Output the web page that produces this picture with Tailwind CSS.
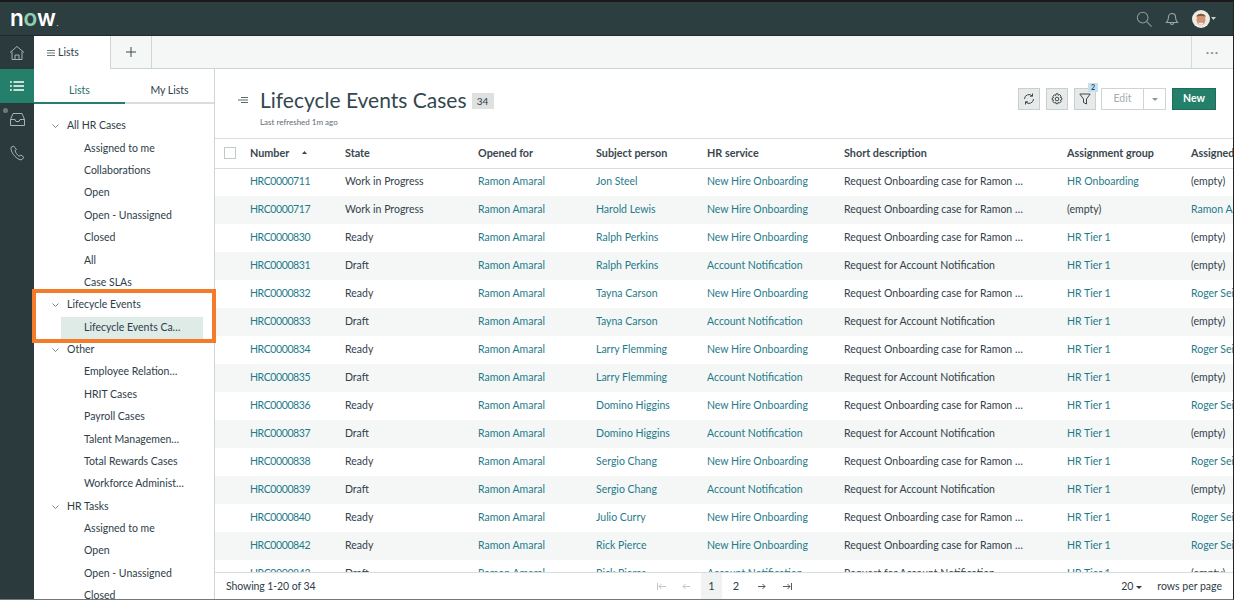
<!doctype html>
<html><head><meta charset="utf-8"><script src="https://cdn.jsdelivr.net/npm/@tailwindcss/browser@4"></script></head>
<body class="m-0 bg-white">
<div class="relative w-[1234px] h-[600px] overflow-hidden font-['Lato','Liberation_Sans',sans-serif] text-[10.5px] text-[#2e3d49] border-t-2 border-t-[#1a1a1a] border-b border-b-[#777] border-r border-r-[#222] flex flex-col">
  <header class="h-[34px] shrink-0 bg-[#2d3e40] flex items-center border-b border-[#1f2c2e]">
    <div class="ml-[10px] text-white font-['Inter',sans-serif] font-semibold text-[22.5px] leading-none tracking-[-0.3px] flex items-center">n<span class="text-[#8fd0b0]">o</span>w<span class="text-[6px] ml-px self-end mb-[3px]">.</span></div>
    <div class="ml-auto flex items-center mr-[17px]">
      <svg class="w-[16px] h-[16px] text-[#8d9a9b]" viewBox="0 0 18 18" fill="none" stroke="currentColor" stroke-width="1.200"><circle cx="7.500" cy="7.500" r="6"/><path d="M11.800 11.800l5.700 5.700"/></svg>
      <svg class="w-[14px] h-[15px] ml-[13px] text-[#9aa6a7]" viewBox="0 0 14 15" fill="none" stroke="currentColor" stroke-width="1.100"><path d="M1.500 11.500c1-1 2-2 2-5.500a3.500 3.500 0 017 0c0 3.500 1 4.500 2 5.500zM5.300 11.800a1.700 1.700 0 003.400 0"/></svg>
      <svg class="w-[18px] h-[18px] ml-[13px]" viewBox="0 0 17 17"><circle cx="8.500" cy="8.500" r="8.500" fill="#eeeae4"/><ellipse cx="8.500" cy="9" rx="4.200" ry="5.500" fill="#cf9472"/><path d="M4 6.500c.5-4 8.500-4 9 0-2-1.200-7-1.200-9 0z" fill="#7c5a3e"/><path d="M6 12h5l-1 2H7z" fill="#f4ece4"/></svg>
      <svg class="w-[5px] h-[3px] ml-[1px]" viewBox="0 0 5 3"><path d="M0 0h5L2.500 3z" fill="#c9d0d1"/></svg>
    </div>
  </header>
  <div class="flex flex-1 min-h-0">
    <nav class="w-[34px] shrink-0 bg-[#2b3a3c] flex flex-col">
      <div class="h-[33px] flex items-center justify-center"><svg class="w-[16px] h-[16px] text-[#a9b3b4]" viewBox="0 0 16 16" fill="none" stroke="currentColor" stroke-width="1"><path d="M1 7.500L8 1.500l7 6M3 6.500V14.500h10V6.500M6 14.500V10h4v4.500"/></svg></div>
      <div class="h-[34px] bg-[#24806a] flex items-center justify-center"><svg class="w-[14px] h-[10px] text-white" viewBox="0 0 14 10" fill="none" stroke="currentColor" stroke-width="1.400"><path d="M3.500 1H14M3.500 5H14M3.500 9H14M0 1h1.800M0 5h1.800M0 9h1.800"/></svg></div>
      <div class="relative h-[33px] flex items-center justify-center"><span class="absolute left-[3px] top-[5px] w-[5px] h-[5px] rounded-full bg-[#6c7a7c]"></span><svg class="w-[15px] h-[13px] text-[#a9b3b4]" viewBox="0 0 15 13" fill="none" stroke="currentColor" stroke-width="1"><path d="M3 .5h9l2.500 6v6H.5v-6zM.5 6.500H5l1 2h3l1-2h4.500"/></svg></div>
      <div class="h-[34px] flex items-center justify-center"><svg class="w-[15px] h-[16px] text-[#a9b3b4]" viewBox="0 0 15 16" fill="none" stroke="currentColor" stroke-width="1"><path d="M3.500 1L1 2.500C.5 6.500 5 13.500 11 15l3-2.500-3-2.500-2 1.200C7 10 5.500 7.500 5 5.500L6.500 4.500z"/></svg></div>
    </nav>
    <div class="flex-1 min-w-0 flex flex-col">
      <div class="h-[33px] shrink-0 bg-[#f5f6f6] flex border-b border-[#cfd5d6]">
        <div class="w-[77px] h-[33px] bg-white border-r border-[#cfd5d6] flex items-center pl-[13px] pt-[1px] gap-[3px]"><svg class="w-[8px] h-[6px] text-[#5b6a6c]" viewBox="0 0 8 6" stroke="currentColor" stroke-width=".9" fill="none"><path d="M0 .5h8M0 3h8M0 5.500h8"/></svg><span>Lists</span></div>
        <div class="w-[41px] border-r border-[#cfd5d6] flex items-center justify-center"><svg class="w-[10px] h-[10px] text-[#3d4a4c]" viewBox="0 0 10 10" stroke="currentColor" fill="none"><path d="M5 0v10M0 5h10"/></svg></div>
        <div class="ml-auto w-[42px] border-l border-[#d5dadb] flex items-center justify-center text-[#8d9899] text-[6px] tracking-[1px]">•••</div>
      </div>
      <div class="flex flex-1 min-h-0">
        <aside class="w-[181px] shrink-0 border-r border-[#cfd5d6] bg-white overflow-hidden">
          <div class="flex h-[35px]">
            <div class="w-[91px] flex items-center justify-center pt-[11px] text-[#24706a] border-b-2 border-[#24806a]">Lists</div>
            <div class="flex-1 flex items-center justify-center pt-[11px] border-b-2 border-[#d8dddd]">My Lists</div>
          </div>
          <div class="pt-[11px]">
            <div class="h-[22.38px] flex items-center pl-[18px]"><svg class="w-[7px] h-[4px] mr-[8px] text-[#5b6a6c]" viewBox="0 0 7 4" fill="none" stroke="currentColor" stroke-width=".8"><path d="M.5.5l3 3 3-3"/></svg>All HR Cases</div>
            <div class="h-[22.38px] flex items-center pl-[50px]">Assigned to me</div>
            <div class="h-[22.38px] flex items-center pl-[50px]">Collaborations</div>
            <div class="h-[22.38px] flex items-center pl-[50px]">Open</div>
            <div class="h-[22.38px] flex items-center pl-[50px]">Open - Unassigned</div>
            <div class="h-[22.38px] flex items-center pl-[50px]">Closed</div>
            <div class="h-[22.38px] flex items-center pl-[50px]">All</div>
            <div class="h-[22.38px] flex items-center pl-[50px]">Case SLAs</div>
            <div class="h-[22.38px] flex items-center pl-[18px]"><svg class="w-[7px] h-[4px] mr-[8px] text-[#5b6a6c]" viewBox="0 0 7 4" fill="none" stroke="currentColor" stroke-width=".8"><path d="M.5.5l3 3 3-3"/></svg>Lifecycle Events</div>
            <div class="h-[22.38px] flex items-center pl-[27px] pr-[11px]"><div class="w-full h-[22px] bg-[#deebe7] flex items-center pl-[23px]">Lifecycle Events Ca…</div></div>
            <div class="h-[22.38px] flex items-center pl-[18px]"><svg class="w-[7px] h-[4px] mr-[8px] text-[#5b6a6c]" viewBox="0 0 7 4" fill="none" stroke="currentColor" stroke-width=".8"><path d="M.5.5l3 3 3-3"/></svg>Other</div>
            <div class="h-[22.38px] flex items-center pl-[50px]">Employee Relation…</div>
            <div class="h-[22.38px] flex items-center pl-[50px]">HRIT Cases</div>
            <div class="h-[22.38px] flex items-center pl-[50px]">Payroll Cases</div>
            <div class="h-[22.38px] flex items-center pl-[50px]">Talent Managemen…</div>
            <div class="h-[22.38px] flex items-center pl-[50px]">Total Rewards Cases</div>
            <div class="h-[22.38px] flex items-center pl-[50px]">Workforce Administ…</div>
            <div class="h-[22.38px] flex items-center pl-[18px]"><svg class="w-[7px] h-[4px] mr-[8px] text-[#5b6a6c]" viewBox="0 0 7 4" fill="none" stroke="currentColor" stroke-width=".8"><path d="M.5.5l3 3 3-3"/></svg>HR Tasks</div>
            <div class="h-[22.38px] flex items-center pl-[50px]">Assigned to me</div>
            <div class="h-[22.38px] flex items-center pl-[50px]">Open</div>
            <div class="h-[22.38px] flex items-center pl-[50px]">Open - Unassigned</div>
            <div class="h-[22.38px] flex items-center pl-[50px]">Closed</div>
          </div>
        </aside>
        <main class="flex-1 min-w-0 flex flex-col overflow-hidden bg-white">
          <div class="h-[70px] shrink-0 relative flex border-b border-[#d8dddd]">
            <svg class="absolute left-[23px] top-[28px] w-[10px] h-[6px] text-[#5b6a6c]" viewBox="0 0 10 6" fill="currentColor"><path d="M3 0h7v1H3zM0 2.500h10v1H0zM3 5h7v1H3z"/></svg>
            <div class="pl-[45px] pt-[17px]">
              <div class="flex items-center"><span class="text-[21px] leading-[28px] text-[#33474f]">Lifecycle Events Cases</span><span class="ml-[5px] mt-[2px] w-[22px] h-[16px] bg-[#dfe1e1] flex items-center justify-center text-[10px]">34</span></div>
              <div class="text-[8px] leading-[10px] mt-[3px] text-[#5f6d76]">Last refreshed 1m ago</div>
            </div>
            <div class="ml-auto flex items-start pt-[19px] pr-[17px]">
              <div class="w-[22px] h-[22px] bg-[#e8eaea] border border-[#c9cfd0] flex items-center justify-center"><svg class="w-[12px] h-[12px] text-[#3d4a4c]" viewBox="0 0 12 12" fill="none" stroke="currentColor" stroke-width="1"><path d="M1.500 6a4.500 4.500 0 017.800-3M10.500 6a4.500 4.500 0 01-7.800 3M9.500 .5V3.200H7M2.500 11.500V8.800H5"/></svg></div>
              <div class="w-[22px] h-[22px] ml-[6px] bg-[#e8eaea] border border-[#c9cfd0] flex items-center justify-center"><svg class="w-[12px] h-[12px] text-[#3d4a4c]" viewBox="0 0 12 12" fill="none" stroke="currentColor" stroke-width="1"><circle cx="6" cy="6" r="1.800"/><path d="M5 .8h2l.3 1.500 1.300-.7 1.500 1.500-.8 1.300 1.500.4v2l-1.500.4.800 1.300-1.500 1.500-1.300-.8-.3 1.500H5l-.3-1.500-1.300.8-1.500-1.500.8-1.300L1.200 7V5l1.500-.4-.8-1.300 1.500-1.500 1.300.7z"/></svg></div>
              <div class="relative w-[22px] h-[22px] ml-[6px] bg-[#e8eaea] border border-[#c9cfd0] flex items-center justify-center"><span class="absolute -top-[6px] left-[13px] w-[10px] h-[9px] bg-[#c6e0ef] text-[#23506b] text-[7px] leading-[9px] font-bold text-center">2</span><svg class="w-[12px] h-[12px] text-[#3d4a4c]" viewBox="0 0 12 12" fill="none" stroke="currentColor" stroke-width="1"><path d="M.8 1h10.400L7.500 6v5l-3-1.500V6z"/></svg></div>
              <div class="w-[43px] h-[22px] ml-[5px] border border-[#cfd5d6] flex items-center justify-center text-[#a4adae]">Edit</div>
              <div class="w-[22px] h-[22px] border border-l-0 border-[#cfd5d6] flex items-center justify-center"><svg class="w-[6px] h-[3px]" viewBox="0 0 6 3"><path d="M0 0h6L3 3z" fill="#8b9596"/></svg></div>
              <div class="w-[44px] h-[22px] ml-[6px] bg-[#24806a] border border-[#1e6b59] flex items-center justify-center text-white font-bold text-[10.5px]">New</div>
            </div>
          </div>
          <div class="flex-1 min-h-0 overflow-hidden">
            <table class="table-fixed border-collapse w-[1100px] whitespace-nowrap">
              <colgroup><col class="w-[35px]"><col class="w-[95px]"><col class="w-[133px]"><col class="w-[118px]"><col class="w-[111px]"><col class="w-[137px]"><col class="w-[223px]"><col class="w-[124px]"><col class="w-[124px]"></colgroup>
              <thead><tr class="h-[29px] border-b border-[#d8dddd] text-[10.8px] font-bold text-left text-[#3a474e]">
                <th class="pl-[9px] pb-[1px]"><span class="block w-[12px] h-[12px] border border-[#c3c9ca] bg-white"></span></th>
                <th class="font-bold pb-[1px]">Number<svg class="inline w-[5px] h-[3px] ml-[13px] mb-[2px]" viewBox="0 0 5 3"><path d="M2.500 0L5 3H0z" fill="#3a474e"/></svg></th><th class="font-bold pb-[1px]">State</th><th class="font-bold pb-[1px]">Opened for</th><th class="font-bold pb-[1px]">Subject person</th><th class="font-bold pb-[1px]">HR service</th><th class="font-bold pb-[1px]">Short description</th><th class="font-bold pb-[1px]">Assignment group</th><th class="font-bold pb-[1px]">Assigned to</th>
              </tr></thead>
              <tbody class="text-[#33414a] [&_td:nth-child(2)]:tracking-[-0.4px]">
                <tr class="h-[28px]"><td></td><td class="text-[#1f7b8a]">HRC0000711</td><td>Work in Progress</td><td class="text-[#1f7b8a]">Ramon Amaral</td><td class="text-[#1f7b8a]">Jon Steel</td><td class="text-[#1f7b8a]">New Hire Onboarding</td><td>Request Onboarding case for Ramon …</td><td class="text-[#1f7b8a]">HR Onboarding</td><td>(empty)</td></tr>
                <tr class="h-[28px] bg-[#f4f7f6]"><td></td><td class="text-[#1f7b8a]">HRC0000717</td><td>Work in Progress</td><td class="text-[#1f7b8a]">Ramon Amaral</td><td class="text-[#1f7b8a]">Harold Lewis</td><td class="text-[#1f7b8a]">New Hire Onboarding</td><td>Request Onboarding case for Ramon …</td><td>(empty)</td><td class="text-[#1f7b8a]">Ramon Amaral</td></tr>
                <tr class="h-[28px]"><td></td><td class="text-[#1f7b8a]">HRC0000830</td><td>Ready</td><td class="text-[#1f7b8a]">Ramon Amaral</td><td class="text-[#1f7b8a]">Ralph Perkins</td><td class="text-[#1f7b8a]">New Hire Onboarding</td><td>Request Onboarding case for Ramon …</td><td class="text-[#1f7b8a]">HR Tier 1</td><td>(empty)</td></tr>
                <tr class="h-[28px] bg-[#f4f7f6]"><td></td><td class="text-[#1f7b8a]">HRC0000831</td><td>Draft</td><td class="text-[#1f7b8a]">Ramon Amaral</td><td class="text-[#1f7b8a]">Ralph Perkins</td><td class="text-[#1f7b8a]">Account Notification</td><td>Request for Account Notification</td><td class="text-[#1f7b8a]">HR Tier 1</td><td>(empty)</td></tr>
                <tr class="h-[28px]"><td></td><td class="text-[#1f7b8a]">HRC0000832</td><td>Ready</td><td class="text-[#1f7b8a]">Ramon Amaral</td><td class="text-[#1f7b8a]">Tayna Carson</td><td class="text-[#1f7b8a]">New Hire Onboarding</td><td>Request Onboarding case for Ramon …</td><td class="text-[#1f7b8a]">HR Tier 1</td><td class="text-[#1f7b8a]">Roger Seid</td></tr>
                <tr class="h-[28px] bg-[#f4f7f6]"><td></td><td class="text-[#1f7b8a]">HRC0000833</td><td>Draft</td><td class="text-[#1f7b8a]">Ramon Amaral</td><td class="text-[#1f7b8a]">Tayna Carson</td><td class="text-[#1f7b8a]">Account Notification</td><td>Request for Account Notification</td><td class="text-[#1f7b8a]">HR Tier 1</td><td>(empty)</td></tr>
                <tr class="h-[28px]"><td></td><td class="text-[#1f7b8a]">HRC0000834</td><td>Ready</td><td class="text-[#1f7b8a]">Ramon Amaral</td><td class="text-[#1f7b8a]">Larry Flemming</td><td class="text-[#1f7b8a]">New Hire Onboarding</td><td>Request Onboarding case for Ramon …</td><td class="text-[#1f7b8a]">HR Tier 1</td><td class="text-[#1f7b8a]">Roger Seid</td></tr>
                <tr class="h-[28px] bg-[#f4f7f6]"><td></td><td class="text-[#1f7b8a]">HRC0000835</td><td>Draft</td><td class="text-[#1f7b8a]">Ramon Amaral</td><td class="text-[#1f7b8a]">Larry Flemming</td><td class="text-[#1f7b8a]">Account Notification</td><td>Request for Account Notification</td><td class="text-[#1f7b8a]">HR Tier 1</td><td>(empty)</td></tr>
                <tr class="h-[28px]"><td></td><td class="text-[#1f7b8a]">HRC0000836</td><td>Ready</td><td class="text-[#1f7b8a]">Ramon Amaral</td><td class="text-[#1f7b8a]">Domino Higgins</td><td class="text-[#1f7b8a]">New Hire Onboarding</td><td>Request Onboarding case for Ramon …</td><td class="text-[#1f7b8a]">HR Tier 1</td><td class="text-[#1f7b8a]">Roger Seid</td></tr>
                <tr class="h-[28px] bg-[#f4f7f6]"><td></td><td class="text-[#1f7b8a]">HRC0000837</td><td>Draft</td><td class="text-[#1f7b8a]">Ramon Amaral</td><td class="text-[#1f7b8a]">Domino Higgins</td><td class="text-[#1f7b8a]">Account Notification</td><td>Request for Account Notification</td><td class="text-[#1f7b8a]">HR Tier 1</td><td>(empty)</td></tr>
                <tr class="h-[28px]"><td></td><td class="text-[#1f7b8a]">HRC0000838</td><td>Ready</td><td class="text-[#1f7b8a]">Ramon Amaral</td><td class="text-[#1f7b8a]">Sergio Chang</td><td class="text-[#1f7b8a]">New Hire Onboarding</td><td>Request Onboarding case for Ramon …</td><td class="text-[#1f7b8a]">HR Tier 1</td><td class="text-[#1f7b8a]">Roger Seid</td></tr>
                <tr class="h-[28px] bg-[#f4f7f6]"><td></td><td class="text-[#1f7b8a]">HRC0000839</td><td>Draft</td><td class="text-[#1f7b8a]">Ramon Amaral</td><td class="text-[#1f7b8a]">Sergio Chang</td><td class="text-[#1f7b8a]">Account Notification</td><td>Request for Account Notification</td><td class="text-[#1f7b8a]">HR Tier 1</td><td>(empty)</td></tr>
                <tr class="h-[28px]"><td></td><td class="text-[#1f7b8a]">HRC0000840</td><td>Ready</td><td class="text-[#1f7b8a]">Ramon Amaral</td><td class="text-[#1f7b8a]">Julio Curry</td><td class="text-[#1f7b8a]">New Hire Onboarding</td><td>Request Onboarding case for Ramon …</td><td class="text-[#1f7b8a]">HR Tier 1</td><td class="text-[#1f7b8a]">Roger Seid</td></tr>
                <tr class="h-[28px] bg-[#f4f7f6]"><td></td><td class="text-[#1f7b8a]">HRC0000842</td><td>Ready</td><td class="text-[#1f7b8a]">Ramon Amaral</td><td class="text-[#1f7b8a]">Rick Pierce</td><td class="text-[#1f7b8a]">New Hire Onboarding</td><td>Request Onboarding case for Ramon …</td><td class="text-[#1f7b8a]">HR Tier 1</td><td class="text-[#1f7b8a]">Roger Seid</td></tr>
                <tr class="h-[28px]"><td></td><td class="text-[#1f7b8a]">HRC0000843</td><td>Draft</td><td class="text-[#1f7b8a]">Ramon Amaral</td><td class="text-[#1f7b8a]">Rick Pierce</td><td class="text-[#1f7b8a]">Account Notification</td><td>Request for Account Notification</td><td class="text-[#1f7b8a]">HR Tier 1</td><td>(empty)</td></tr>
              </tbody>
            </table>
          </div>
          <footer class="h-[27px] shrink-0 bg-white border-t border-[#d8dddd] flex items-center relative pt-[2px]">
            <span class="ml-[11px] tracking-[-0.1px]">Showing 1-20 of 34</span>
            <div class="absolute left-[439px] top-0 h-full flex items-center">
              <span class="w-[14px] flex justify-center"><svg class="w-[9px] h-[7px] text-[#b8c0c1]" viewBox="0 0 9 7" fill="none" stroke="currentColor" stroke-width=".9"><path d="M.5 0v7M9 3.500H2M4.500 1L2 3.500 4.500 6"/></svg></span>
              <span class="w-[24px] ml-[6px] flex justify-center"><svg class="w-[8px] h-[7px] text-[#b8c0c1]" viewBox="0 0 8 7" fill="none" stroke="currentColor" stroke-width=".9"><path d="M8 3.500H1M3.500 1L1 3.500 3.500 6"/></svg></span>
              <span class="w-[21px] h-[26px] ml-[3px] flex items-center justify-center bg-[#f1f3f3] text-[11px]">1</span>
              <span class="w-[24px] ml-[2px] text-center text-[11px]">2</span>
              <span class="w-[24px] ml-[2px] flex justify-center"><svg class="w-[8px] h-[7px] text-[#3d4a4c]" viewBox="0 0 8 7" fill="none" stroke="currentColor" stroke-width=".9"><path d="M0 3.500h7M4.500 1L7 3.500 4.500 6"/></svg></span>
              <span class="w-[26px] flex justify-center"><svg class="w-[9px] h-[7px] text-[#3d4a4c]" viewBox="0 0 9 7" fill="none" stroke="currentColor" stroke-width=".9"><path d="M8.500 0v7M0 3.500h7M4.500 1L7 3.500 4.500 6"/></svg></span>
            </div>
            <div class="ml-auto flex items-center mr-[11px]"><span>20</span><svg class="w-[6px] h-[3px] ml-[3px]" viewBox="0 0 6 3"><path d="M0 0h6L3 3z" fill="#2e3d49"/></svg><span class="ml-[15px]">rows per page</span></div>
          </footer>
        </main>
      </div>
    </div>
  </div>
  <div class="absolute left-[32px] top-[287px] w-[184px] h-[54px] border-[4px] border-[#f47b2a]"></div>
</div>
</body></html>
